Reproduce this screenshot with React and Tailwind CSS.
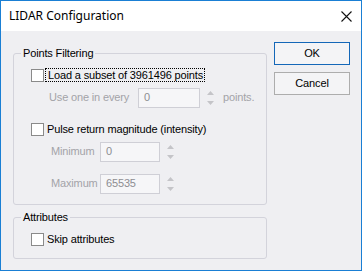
import React from 'react';

const font = { fontFamily: '"Liberation Sans", Arial, sans-serif' };

const Checkbox = () => (
  <span className="w-[13px] h-[13px] border border-[#8a8a8a] bg-white shrink-0" />
);

const Spinner = () => (
  <div className="flex flex-col items-center justify-center gap-[6px] w-[8px] ml-[6px]">
    <svg width="7" height="4" viewBox="0 0 7 4">
      <path d="M3.5 0 L7 4 L0 4 Z" fill="#c4c4c8" />
    </svg>
    <svg width="7" height="4" viewBox="0 0 7 4">
      <path d="M0 0 L7 0 L3.5 4 Z" fill="#c4c4c8" />
    </svg>
  </div>
);

const NumberBox = ({ value, width }) => (
  <div
    className={`${width} h-[20px] border border-[#cfcfd6] bg-[#f6f6f8] flex items-center pl-[5px] text-[#8d8d92]`}
  >
    {value}
  </div>
);

export default function App() {
  return (
    <div
      className="w-[362px] h-[271px] border border-[#1a7fd4] bg-[#efeff2] flex flex-col text-[11px] tracking-[-0.15px] text-black whitespace-nowrap"
      style={font}
    >
      <div className="h-[30px] bg-white flex items-center justify-between pl-[8px] pr-[9px] shrink-0">
        <span
          className="text-[12px] tracking-normal text-black"
          style={{ fontFamily: '"Segoe UI", "Noto Sans", sans-serif' }}
        >
          LIDAR Configuration
        </span>
        <svg width="11" height="11" viewBox="0 0 11 11">
          <path d="M0.5 0.5 L10.5 10.5 M10.5 0.5 L0.5 10.5" stroke="#111" strokeWidth="1.1" />
        </svg>
      </div>

      <div className="flex pl-[12px]">
        <div className="w-[254px] flex flex-col">
          <fieldset className="mt-[16px] h-[158px] border border-[#d3d3db] rounded-[3px] pl-[17px]">
            <legend className="ml-[-10px] px-[2px] leading-[13px]">Points Filtering</legend>
            <div className="flex items-center h-[14px] mt-[8px]">
              <Checkbox />
              <span className="ml-[1px] border border-dotted border-black pl-[2px] pr-[1px] leading-[12px]">
                Load a subset of 3961496 points
              </span>
            </div>
            <div className="flex items-center h-[21px] mt-[5px] text-[#a3a3a8]">
              <span className="w-[107px] pl-[18px]">Use one in every</span>
              <NumberBox value="0" width="w-[62px]" />
              <Spinner />
              <span className="ml-[9px]">points.</span>
            </div>
            <div className="flex items-center h-[14px] mt-[14px]">
              <Checkbox />
              <span className="ml-[3px]">Pulse return magnitude (intensity)</span>
            </div>
            <div className="flex items-center h-[21px] mt-[5px] text-[#a3a3a8]">
              <span className="w-[69px] pl-[20px]">Minimum</span>
              <NumberBox value="0" width="w-[60px]" />
              <Spinner />
            </div>
            <div className="flex items-center h-[21px] mt-[11px] text-[#a3a3a8]">
              <span className="w-[69px] pl-[20px]">Maximum</span>
              <NumberBox value="65535" width="w-[60px]" />
              <Spinner />
            </div>
          </fieldset>

          <fieldset className="mt-[6px] h-[48px] border border-[#d3d3db] rounded-[3px] pl-[17px]">
            <legend className="ml-[-10px] px-[2px] leading-[13px]">Attributes</legend>
            <div className="flex items-center h-[14px] mt-[8px]">
              <Checkbox />
              <span className="ml-[3px]">Skip attributes</span>
            </div>
          </fieldset>
        </div>

        <div className="ml-[7px] mt-[11px] flex flex-col gap-[7px]">
          <button className="w-[76px] h-[23px] border border-[#1467b8] bg-[#f4f4f6] text-[11px]">
            OK
          </button>
          <button className="w-[76px] h-[23px] border border-[#adadad] bg-[#f4f4f6] text-[11px]">
            Cancel
          </button>
        </div>
      </div>
    </div>
  );
}
